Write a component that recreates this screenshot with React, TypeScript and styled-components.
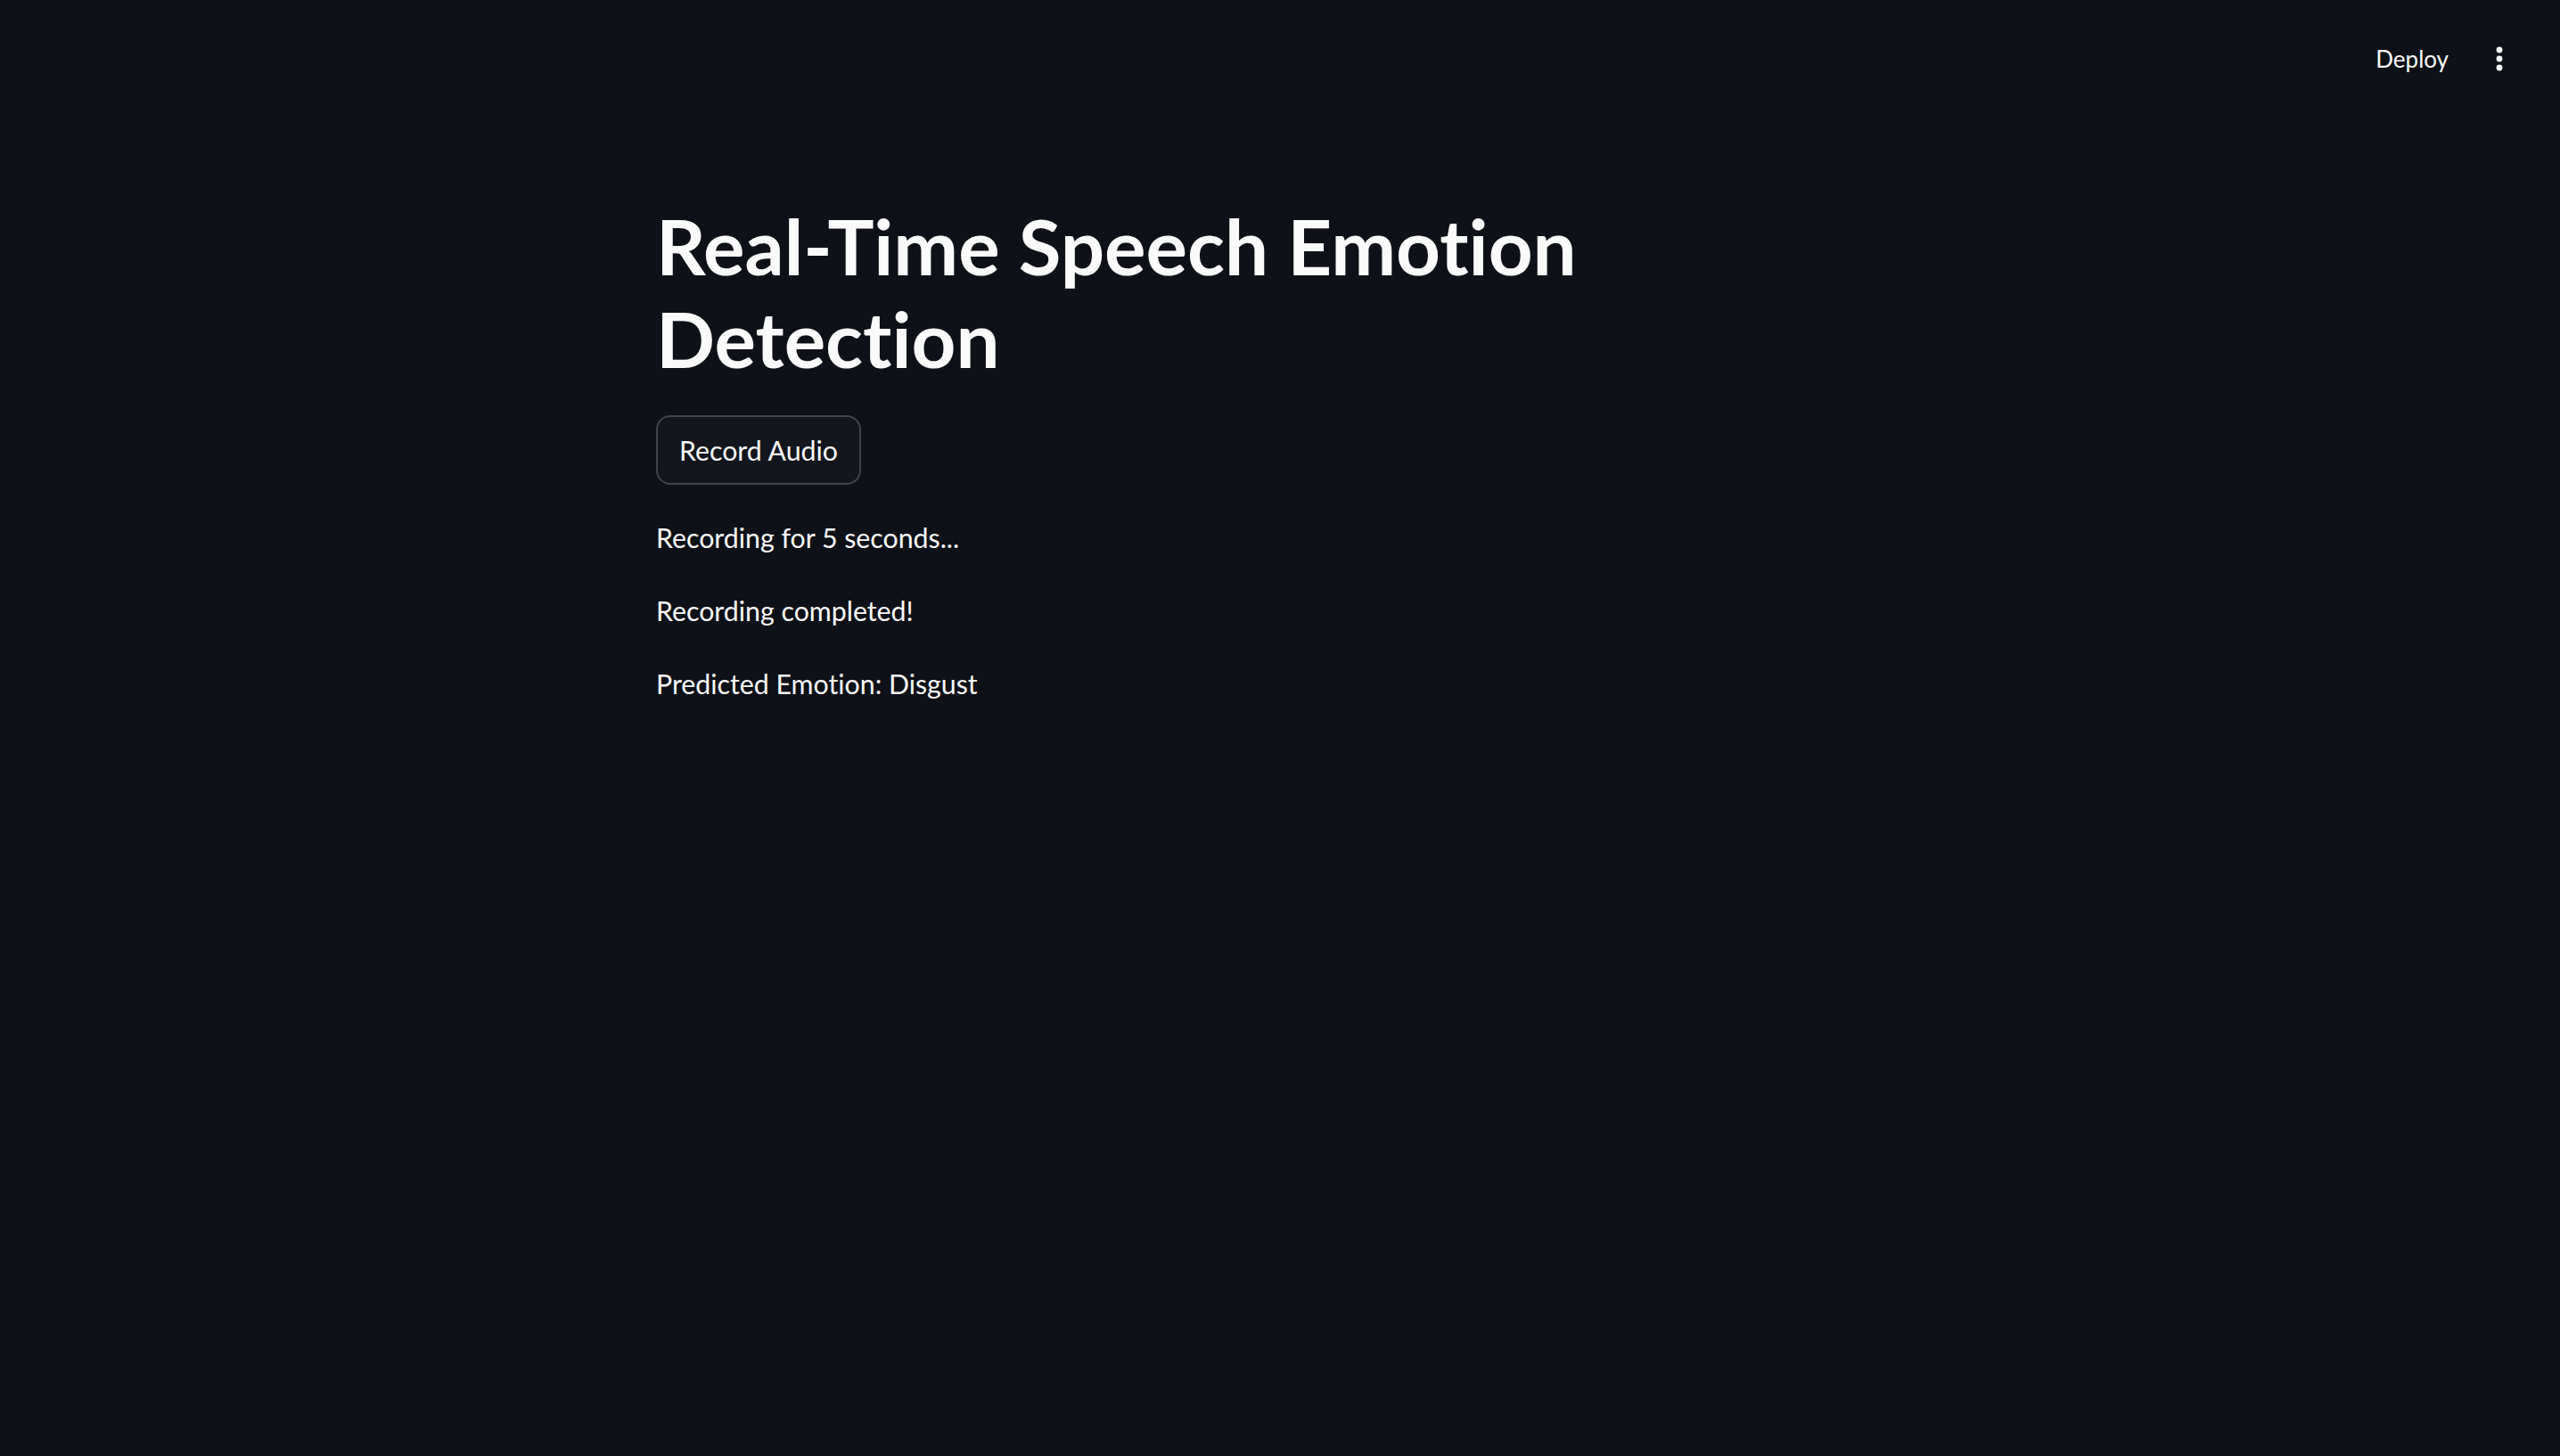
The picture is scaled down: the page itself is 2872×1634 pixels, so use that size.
import React from "react";
import styled, { createGlobalStyle } from "styled-components";

const GlobalStyle = createGlobalStyle`
  html, body {
    margin: 0;
    padding: 0;
    background: #0e1117;
    color: #fafafa;
    font-family: "Lato", "Noto Sans", sans-serif;
    font-variant-ligatures: none;
    font-feature-settings: "liga" 0, "clig" 0;
  }
  * { box-sizing: border-box; }
`;

const Page = styled.div`
  min-height: 1634px;
  background: #0e1117;
  display: flex;
  flex-direction: column;
`;

const Header = styled.header`
  height: 132px;
  display: flex;
  align-items: center;
  justify-content: flex-end;
  gap: 37px;
  padding-right: 48px;
`;

const DeployButton = styled.button`
  background: transparent;
  border: none;
  color: #fafafa;
  font-family: "Lato", "Noto Sans", sans-serif;
  font-size: 26px;
  line-height: 36px;
  padding: 0;
  cursor: pointer;
  font-variant-ligatures: none;
`;

const MenuButton = styled.button`
  width: 40px;
  height: 40px;
  display: flex;
  align-items: center;
  justify-content: center;
  background: transparent;
  border: none;
  padding: 0;
  color: #fafafa;
`;

const Main = styled.main`
  width: 1400px;
  margin: 0 auto;
  padding-top: 92px;
  display: flex;
  flex-direction: column;
  align-items: flex-start;
  gap: 32px;
`;

const Title = styled.h1`
  margin: 0 0 2px 0;
  max-width: 1300px;
  font-family: "Lato", "Noto Sans", sans-serif;
  font-weight: 700;
  font-size: 87px;
  line-height: 104px;
  color: #fafafa;
  font-variant-ligatures: none;
  font-feature-settings: "liga" 0, "clig" 0;
`;

const ActionButton = styled.button`
  height: 78px;
  margin-bottom: 2px;
  padding: 0 24px;
  border: 2px solid rgba(250, 250, 250, 0.2);
  border-radius: 16px;
  background: #13161d;
  color: #fafafa;
  font-family: "Lato", "Noto Sans", sans-serif;
  font-size: 30.3px;
  line-height: 40px;
  display: flex;
  align-items: center;
  cursor: pointer;
  font-variant-ligatures: none;
`;

const Message = styled.p`
  margin: 0;
  font-family: "Lato", "Noto Sans", sans-serif;
  font-size: 30.3px;
  line-height: 50px;
  color: #fafafa;
  font-variant-ligatures: none;
  font-feature-settings: "liga" 0, "clig" 0;
`;

const KebabIcon = () => (
  <svg width="14" height="32" viewBox="0 0 14 32" aria-hidden="true">
    <circle cx="7" cy="6" r="3.4" fill="currentColor" />
    <circle cx="7" cy="16" r="3.4" fill="currentColor" />
    <circle cx="7" cy="26" r="3.4" fill="currentColor" />
  </svg>
);

export default function App() {
  return (
    <>
      <GlobalStyle />
      <Page>
        <Header>
          <DeployButton>Deploy</DeployButton>
          <MenuButton aria-label="Main menu">
            <KebabIcon />
          </MenuButton>
        </Header>
        <Main>
          <Title>Real-Time Speech Emotion Detection</Title>
          <ActionButton>Record Audio</ActionButton>
          <Message>Recording for 5 seconds...</Message>
          <Message>Recording completed!</Message>
          <Message>Predicted Emotion: Disgust</Message>
        </Main>
      </Page>
    </>
  );
}
